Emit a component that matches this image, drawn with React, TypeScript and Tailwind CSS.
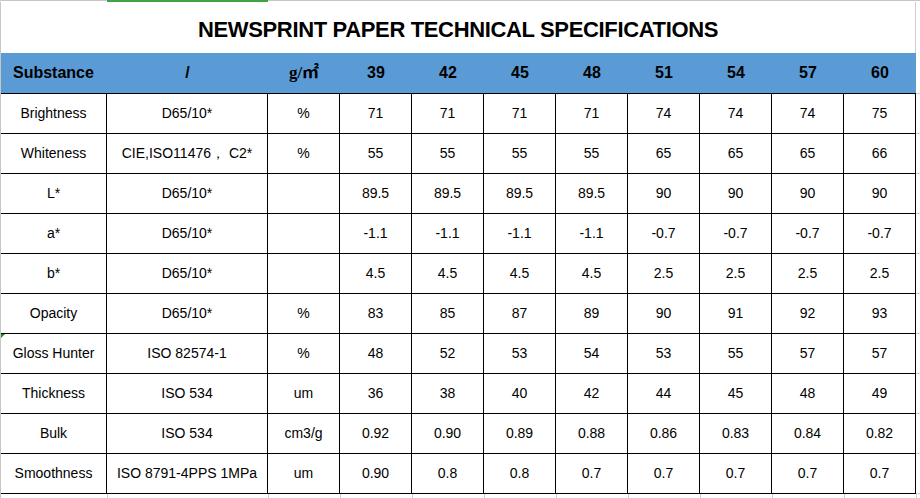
import React from 'react';

const cols = ['w-[106px]', 'w-[161px]', 'w-[72px]'];
const sizes = ['39', '42', '45', '48', '51', '54', '57', '60'];

const rows: [string, string, string, string[]][] = [
  ['Brightness', 'D65/10*', '%', ['71', '71', '71', '71', '74', '74', '74', '75']],
  ['Whiteness', 'CIE,ISO11476， C2*', '%', ['55', '55', '55', '55', '65', '65', '65', '66']],
  ['L*', 'D65/10*', '', ['89.5', '89.5', '89.5', '89.5', '90', '90', '90', '90']],
  ['a*', 'D65/10*', '', ['-1.1', '-1.1', '-1.1', '-1.1', '-0.7', '-0.7', '-0.7', '-0.7']],
  ['b*', 'D65/10*', '', ['4.5', '4.5', '4.5', '4.5', '2.5', '2.5', '2.5', '2.5']],
  ['Opacity', 'D65/10*', '%', ['83', '85', '87', '89', '90', '91', '92', '93']],
  ['Gloss Hunter', 'ISO 82574-1', '%', ['48', '52', '53', '54', '53', '55', '57', '57']],
  ['Thickness', 'ISO 534', 'um', ['36', '38', '40', '42', '44', '45', '48', '49']],
  ['Bulk', 'ISO 534', 'cm3/g', ['0.92', '0.90', '0.89', '0.88', '0.86', '0.83', '0.84', '0.82']],
  ['Smoothness', 'ISO 8791-4PPS 1MPa', 'um', ['0.90', '0.8', '0.8', '0.7', '0.7', '0.7', '0.7', '0.7']],
];

const cell = 'flex items-center justify-center border-r border-black shrink-0';

export default function App() {
  return (
    <div
      className="w-[920px] h-[498px] bg-white overflow-hidden text-black"
      style={{ fontFamily: '"Liberation Sans", Arial, sans-serif' }}
    >
      {/* sheet top edge with selected column marker */}
      <div className="flex h-[2px]">
        <div className="w-[107px] border-t border-[#c6c6c6]" />
        <div className="w-[161px] bg-[#3fa344]" />
        <div className="flex-1 border-t border-[#c6c6c6]" />
      </div>

      <div className="border-l border-[#c6c6c6]">
        {/* title */}
        <div className="flex h-[51px]">
          <div className="w-[915px] border-r border-[#d0d0d0] flex items-center justify-center pt-[3px]">
            <span className="text-[22px] font-bold tracking-[-0.35px]">
              NEWSPRINT PAPER TECHNICAL SPECIFICATIONS
            </span>
          </div>
        </div>

        {/* header */}
        <div className="flex h-[41px]">
          <div className="flex w-[915px] bg-[#5b9bd5] border-b border-black text-[16px] font-bold">
            <div className="w-[106px] flex items-center pl-[12px]">Substance</div>
            <div className="w-[161px] flex items-center justify-center">/</div>
            <div
              className="w-[72px] flex items-center justify-center text-[17px]"
              style={{ fontFamily: '"Liberation Serif", "Noto Sans CJK SC", serif' }}
            >
              g/㎡
            </div>
            {sizes.map((s) => (
              <div key={s} className="w-[72px] flex items-center justify-center">
                {s}
              </div>
            ))}
          </div>
          <div className="flex-1 border-b border-[#d0d0d0]" />
        </div>

        {/* data rows */}
        {rows.map(([name, method, unit, vals], i) => (
          <div key={name} className="flex h-[40px] text-[14px]">
            <div className="flex border-b border-black">
              <div className={`${cell} ${cols[0]} relative`}>
                {i === 6 && (
                  <span className="absolute left-0 top-0 w-0 h-0 border-t-[4px] border-r-[4px] border-t-[#1e8c2c] border-r-transparent" />
                )}
                {name}
              </div>
              <div className={`${cell} ${cols[1]}`}>{method}</div>
              <div className={`${cell} ${cols[2]}`}>{unit}</div>
              {vals.map((v, j) => (
                <div key={j} className={`${cell} w-[72px]`}>
                  {v}
                </div>
              ))}
            </div>
            <div className="flex-1 border-b border-[#d0d0d0]" />
          </div>
        ))}

        {/* sheet gridline stubs below the table */}
        <div className="flex h-[4px]">
          <div className="w-[107px] border-r border-[#d0d0d0]" />
          <div className="w-[161px] border-r border-[#d0d0d0]" />
          {sizes.concat(['x']).map((s) => (
            <div key={s} className="w-[72px] border-r border-[#d0d0d0]" />
          ))}
        </div>
      </div>
    </div>
  );
}
